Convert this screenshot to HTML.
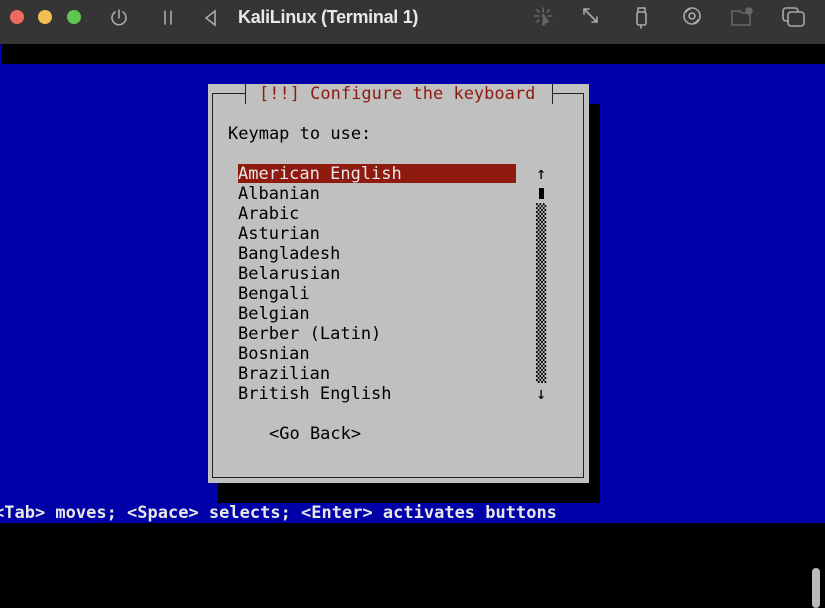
<!DOCTYPE html>
<html><head><meta charset="utf-8"><style>
*{margin:0;padding:0;box-sizing:border-box}
body{width:825px;height:601px;overflow:hidden;background:#000;position:relative;font-family:"DejaVu Sans Mono","Liberation Mono",monospace}
.tb{position:absolute;left:0;top:0;width:825px;height:44px;background:#353535}
.dot{position:absolute;top:10px;width:14px;height:14px;border-radius:50%}
.title{position:absolute;left:238px;top:7px;font:bold 18px "Liberation Sans",sans-serif;color:#e8e8e8;letter-spacing:-0.3px}
.blue{position:absolute;left:0;top:64px;width:825px;height:459px;background:#0000a8}
.t{position:absolute;font-size:17px;line-height:20px;white-space:pre;color:#000}
</style></head><body>
<div class="tb">
<div class="dot" style="left:10px;background:#ec6a5e"></div>
<div class="dot" style="left:38px;background:#f4bf4f"></div>
<div class="dot" style="left:67px;background:#61c554"></div>
<svg style="position:absolute;left:0;top:0" width="825" height="44" fill="none" stroke="#aaa" stroke-width="1.6" stroke-linecap="round">
<path d="M119 10v8M115 12a7 7 0 1 0 8 0"/>
<path d="M165 11v13M171 11v13"/>
<path d="M215 11l-9 7 9 7z"/>
<g stroke="#666"><path d="M543 8v4M543 22v3M535 16h4M548 16h4M537 10l2 2M549 10l-2 2M537 22l2-2"/><path d="M543 14l5 8-3 0-1 3z" fill="#666"/></g>
<path d="M584 9l13 13M584 9v5M584 9h5M597 22v-5M597 22h-5"/>
<rect x="637" y="12" width="9" height="13" rx="2"/><path d="M638 12v-4h7v4M641 25v3"/>
<circle cx="692" cy="16" r="8"/><circle cx="692" cy="16" r="3"/><path d="M686 12a7 7 0 0 1 4-3M698 20a7 7 0 0 1-4 3"/>
<g stroke="#666"><path d="M732 11h8l2 2h8v12h-18z"/><circle cx="749" cy="11" r="3" fill="#666"/></g>
<rect x="783" y="8" width="15" height="13" rx="3"/><rect x="788" y="12" width="16" height="14" rx="3" fill="#353535"/>
</svg>
<div class="title">KaliLinux (Terminal 1)</div>
</div>
<div style="position:absolute;left:0;top:44px;width:2px;height:20px;background:#0000a8"></div>
<div class="blue"></div>
<div style="position:absolute;left:218px;top:104px;width:382px;height:399px;background:#000"></div>
<div style="position:absolute;left:208px;top:84px;width:381px;height:399px;background:#c0c0c0"></div>
<div style="position:absolute;left:212px;top:93px;width:372px;height:385px;border:1.5px solid #222"></div>
<div style="position:absolute;left:245px;top:84px;width:308px;height:20px;background:#c0c0c0;border-left:1.5px solid #222;border-right:1.5px solid #222"></div>
<div class="t" style="left:259px;top:84px;color:#8e1a10">[!!] Configure the keyboard</div>
<div class="t" style="left:228px;top:124px">Keymap to use:</div>
<div style="position:absolute;left:238px;top:164px;width:278px;height:19px;background:#8e1a10"></div>
<div class="t" style="left:238px;top:164px;color:#e8e8e8">American English</div>
<div class="t" style="left:238px;top:184px">Albanian
Arabic
Asturian
Bangladesh
Belarusian
Bengali
Belgian
Berber (Latin)
Bosnian
Brazilian
British English</div>
<div class="t" style="left:536px;top:164px">↑</div>
<div style="position:absolute;left:539px;top:188px;width:5px;height:11px;background:#000"></div>
<div class="t" style="left:536px;top:204px;line-height:20px">▒
▒
▒
▒
▒
▒
▒
▒
▒</div>
<div class="t" style="left:536px;top:384px">↓</div>
<div class="t" style="left:269px;top:424px">&lt;Go Back&gt;</div>
<div class="t" style="left:-6px;top:503px;color:#e8e8e8;font-weight:bold">&lt;Tab&gt; moves; &lt;Space&gt; selects; &lt;Enter&gt; activates buttons</div>
<div style="position:absolute;left:812px;top:568px;width:8px;height:40px;border-radius:4px;background:#bbb"></div>
</body></html>
